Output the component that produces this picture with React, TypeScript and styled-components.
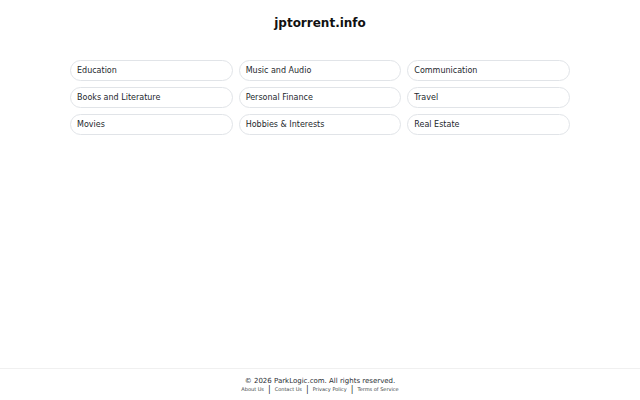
import React from "react"
import styled, { createGlobalStyle } from "styled-components"

const GlobalStyle = createGlobalStyle`
  html, body {
    margin: 0;
    padding: 0;
    background: #ffffff;
    font-family: "DejaVu Sans", sans-serif;
    color: #1f2328;
  }
`

const Page = styled.div`
  display: flex;
  flex-direction: column;
  height: 100vh;
`

const Main = styled.main`
  flex: 1;
  display: flex;
  flex-direction: column;
  align-items: center;
`

const Title = styled.h1`
  margin: 15px 0 0;
  font-size: 12px;
  font-weight: bold;
  line-height: 16px;
  color: #111111;
`

const Grid = styled.div`
  margin-top: 29px;
  width: 500px;
  display: grid;
  grid-template-columns: repeat(3, 1fr);
  column-gap: 6px;
  row-gap: 6.5px;
`

const Pill = styled.a`
  display: flex;
  align-items: center;
  box-sizing: border-box;
  height: 20.5px;
  padding: 0 6px;
  border: 1px solid #e1e4e8;
  border-radius: 999px;
  font-size: 8px;
  color: #24282d;
  text-decoration: none;
`

const Footer = styled.footer`
  border-top: 1px solid #f0f0f0;
  height: 32px;
  display: flex;
  flex-direction: column;
  align-items: center;
  padding-top: 8px;
  box-sizing: border-box;
`

const Copy = styled.div`
  font-size: 7px;
  line-height: 9px;
  color: #2a2e33;
`

const Links = styled.div`
  display: flex;
  align-items: center;
  gap: 4px;
  font-size: 5px;
  line-height: 7px;
  color: #3a3f45;
`

const Sep = styled.span`
  font-size: 8px;
  color: #333;
`

const categories = [
  "Education",
  "Music and Audio",
  "Communication",
  "Books and Literature",
  "Personal Finance",
  "Travel",
  "Movies",
  "Hobbies & Interests",
  "Real Estate",
]

const links = ["About Us", "Contact Us", "Privacy Policy", "Terms of Service"]

export default function App() {
  return (
    <>
      <GlobalStyle />
      <Page>
        <Main>
          <Title>jptorrent.info</Title>
          <Grid>
            {categories.map((c) => (
              <Pill key={c} href="#">
                {c}
              </Pill>
            ))}
          </Grid>
        </Main>
        <Footer>
          <Copy>© 2026 ParkLogic.com. All rights reserved.</Copy>
          <Links>
            {links.map((l, i) => (
              <React.Fragment key={l}>
                {i > 0 && <Sep>|</Sep>}
                <span>{l}</span>
              </React.Fragment>
            ))}
          </Links>
        </Footer>
      </Page>
    </>
  )
}
